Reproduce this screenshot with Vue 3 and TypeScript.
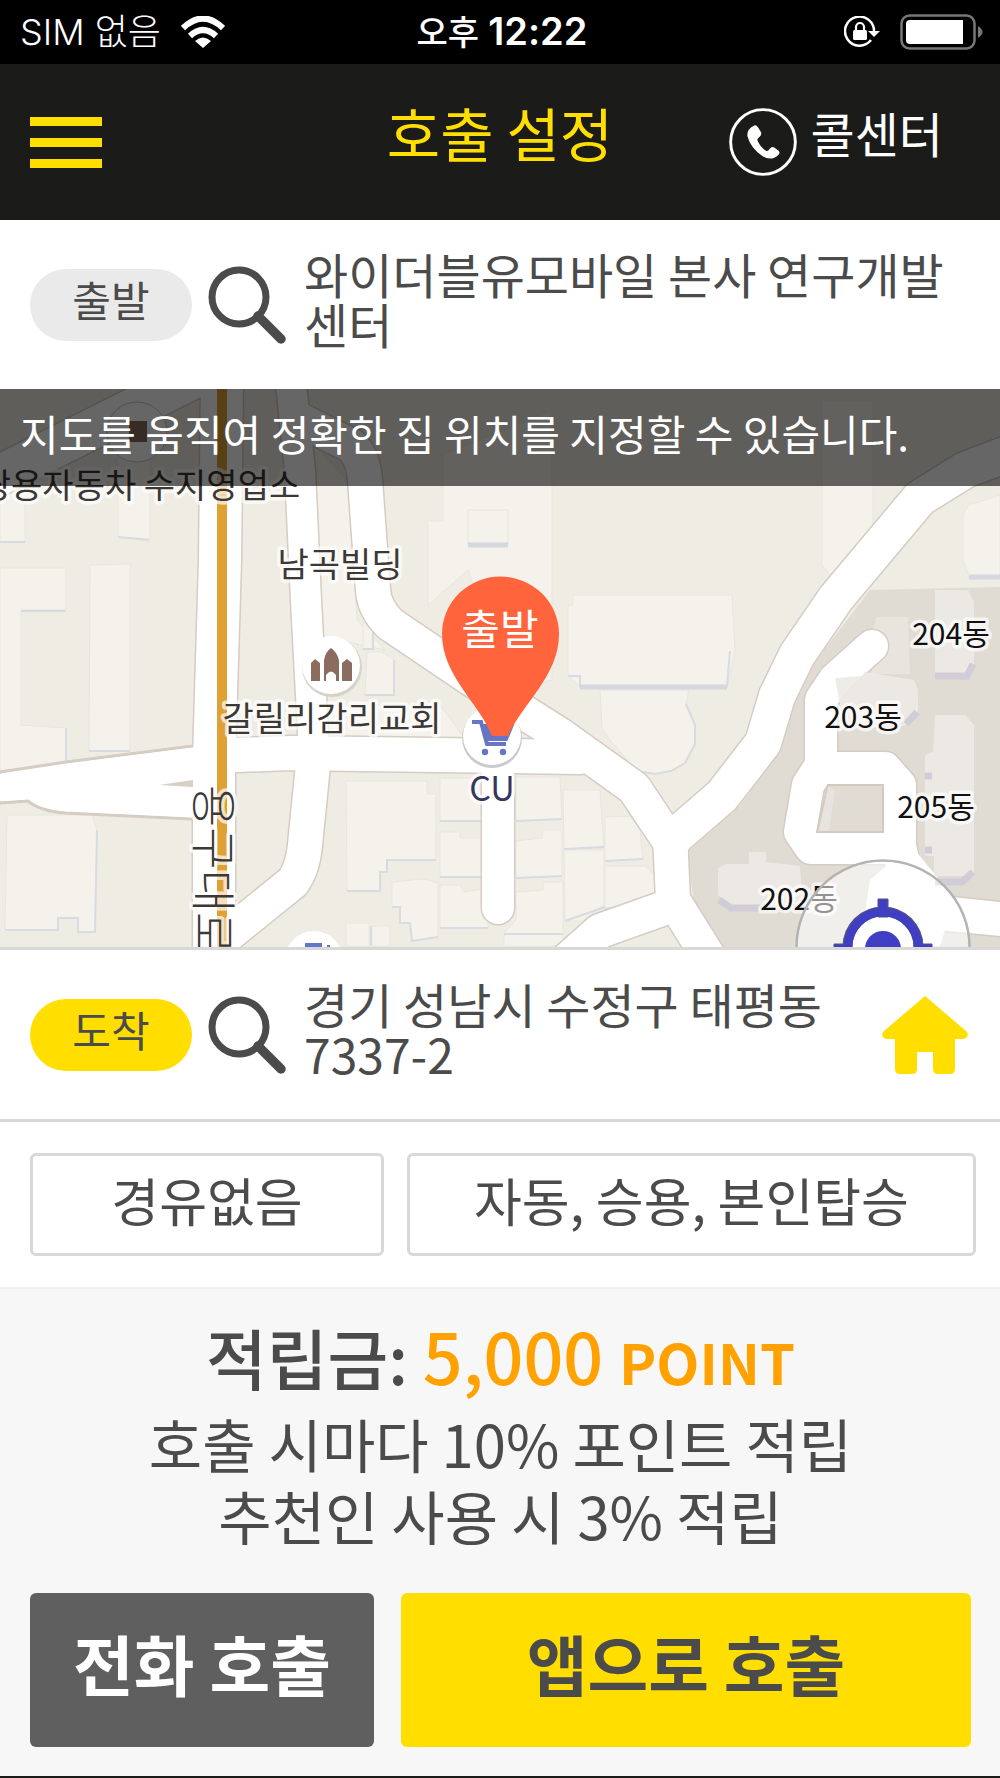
<script setup lang="ts">
interface MapLabel {
  text: string
  x: number
  y: number
  kind: 'place' | 'block'
}

interface Building {
  points: string
  shadow?: string
}

const labels: MapLabel[] = [
  { text: '쌍용자동차 수지영업소', x: 140, y: 498, kind: 'place' },
  { text: '남곡빌딩', x: 340, y: 577, kind: 'place' },
  { text: '갈릴리감리교회', x: 332, y: 731, kind: 'place' },
  { text: '204동', x: 951, y: 645, kind: 'block' },
  { text: '203동', x: 863, y: 728, kind: 'block' },
  { text: '205동', x: 936, y: 818, kind: 'block' },
  { text: '202동', x: 799, y: 910, kind: 'block' },
]

const roads: { d: string; width: number }[] = [
  { d: 'M-10 480L110 420L200 375', width: 40 },
  { d: 'M222 380L220 560L214 760L214 950', width: 42 },
  { d: 'M290 375L300 470L306 600L314 752', width: 30 },
  { d: 'M314 755L305 845Q303 868 293 882L225 937', width: 34 },
  { d: 'M300 420L350 445Q363 455 365 480L373 590Q374 608 390 624L470 678L560 735L634 788L672 845', width: 34 },
  { d: 'M214 756L290 753L580 757', width: 34 },
  { d: 'M498 765V908', width: 32 },
  { d: 'M671 840L722 796L763 743L777 696L797 655L836 598L920 498L965 470L1010 453', width: 36 },
  { d: 'M670 835L673 900L708 956', width: 34 },
  { d: 'M673 905L600 931L565 962', width: 34 },
  { d: 'M872 646L835 679L821 700V765L808 785L800 832L811 848H900V785L885 768H822', width: 32 },
  { d: 'M900 850Q905 895 950 914L1010 920', width: 34 },
]

const buildings: Building[] = [
  { points: '0,568 66,568 66,610 21,610 21,725 66,728 66,768 0,771', shadow: 'M21 611H66M66 728V768L0 771' },
  { points: '90,565 130,564 130,751 89,751', shadow: 'M89 751H130' },
  { points: '0,470 25,480 25,542 0,542', shadow: 'M0 542H25' },
  { points: '118,450 150,450 150,539 118,537', shadow: 'M118 537L149 540' },
  { points: '7,815 92,815 97,830 95,932 78,932 78,918 58,918 58,930 5,930', shadow: 'M5 930H58V918H78V932H95L97 830' },
  { points: '312,440 348,482 357,620 385,650 320,636', shadow: '' },
  { points: '363,622 373,632 373,649 363,649', shadow: 'M363 649H373V632' },
  { points: '367,652 382,652 394,660 394,695 365,695', shadow: 'M365 695H394V660' },
  { points: '331,705 440,705 466,740 433,743 366,745 331,737', shadow: 'M366 745L433 743' },
  { points: '428,521 443,521 443,455 552,410 552,680 510,690 468,570 428,605', shadow: '' },
  { points: '468,510 508,510 508,545 468,545', shadow: 'M468 545H508' },
  { points: '573,595 732,595 735,650 728,685 580,687 568,675 568,605 573,605', shadow: 'M568 676H580V686H727L730 651' },
  { points: '600,690 689,690 686,704 695,725 695,744 685,763 671,771 655,774 637,771 610,740 602,728', shadow: 'M686 704L695 725V744L685 763L671 771L655 774L637 771' },
  { points: '822,400 873,400 873,535 830,575 822,565', shadow: '' },
  { points: '969,505 1000,495 1000,576 969,576 963,560 963,514', shadow: 'M969 576H1000' },
  { points: '346,781 427,781 427,794 436,794 436,860 387,860 387,872 380,872 380,891 347,891', shadow: 'M347 891H380V872H387V860H436' },
  { points: '440,778 485,778 485,821 440,821', shadow: 'M440 821H485' },
  { points: '440,832 460,832 460,838 488,838 488,877 440,877', shadow: 'M440 877H488' },
  { points: '440,885 460,885 464,892 488,888 488,928 440,928', shadow: 'M440 928H488' },
  { points: '392,882 424,879 438,883 438,937 412,941 410,923 400,923 400,907 392,907', shadow: 'M392 907H400V923H410L412 941L438 937' },
  { points: '346,923 369,923 369,946 346,946', shadow: '' },
  { points: '372,926 390,926 390,946 372,946', shadow: 'M371 926V946' },
  { points: '516,777 560,777 562,819 516,821', shadow: 'M516 821L562 819' },
  { points: '516,841 542,838 542,830 562,830 562,876 516,878', shadow: 'M516 878L562 876' },
  { points: '516,892 543,890 543,882 563,882 563,946 504,946 504,933 516,920', shadow: 'M504 934H563' },
  { points: '563,790 600,790 604,848 564,849', shadow: 'M564 849L604 847' },
  { points: '564,850 604,850 604,905 582,921 565,921', shadow: 'M565 921L605 907' },
  { points: '605,817 630,816 640,830 643,859 605,861', shadow: 'M605 861L643 859' },
  { points: '605,866 645,866 655,875 655,896 638,904 605,909', shadow: 'M605 909L638 904L655 896' },
]

const blocks: Building[] = [
  { points: '935,590 968,590 974,602 974,665 965,674 935,674', shadow: 'M935 676H967L973 664' },
  { points: '835,678 862,676 865,672 914,680 918,690 918,712 904,726 850,728 840,705', shadow: 'M906 724L917 712' },
  { points: '935,715 965,715 974,725 974,876 934,876 934,856 925,856 925,755 933,752', shadow: 'M925 776H932M925 850H932M935 882H962L973 872' },
  { points: '718,868 726,864 749,864 749,852 766,852 766,862 800,866 803,905 730,905 718,895', shadow: 'M719 900L731 908H768' },
]
</script>

<template>
  <div class="app">
    <div class="status">
      <div class="status-side">
        <span class="carrier">SIM 없음</span>
        <svg class="wifi" viewBox="0 0 44 32" aria-hidden="true">
          <path d="M2 12Q22-7 42 12M9 20Q22 8 35 20" fill="none" stroke="#fff" stroke-width="6" />
          <path d="M14 25Q22 18 30 25L22 32Z" fill="#fff" />
        </svg>
      </div>
      <span class="time">오후 <b>12:22</b></span>
      <div class="status-side status-right">
        <svg class="lock" viewBox="0 0 36 32" aria-hidden="true">
          <path d="M27 24A14.5 14.5 0 1 1 30 16" fill="none" stroke="#fff" stroke-width="2.5" />
          <path d="M24 15H36L30 21Z" fill="#fff" />
          <rect x="9" y="14" width="14" height="10" rx="1.5" fill="#fff" />
          <path d="M12 15V11A4 4 0 0 1 20 11V15" fill="none" stroke="#fff" stroke-width="2.2" />
        </svg>
        <svg class="battery" viewBox="0 0 84 36" aria-hidden="true">
          <rect x="1.5" y="1.5" width="73" height="33" rx="8" fill="none" stroke="#777" stroke-width="2.5" />
          <path d="M10 6H63V30H10Q6 30 6 26V10Q6 6 10 6Z" fill="#fff" />
          <path d="M78 12Q87 18 78 24Z" fill="#777" />
        </svg>
      </div>
    </div>

    <header class="header">
      <button class="menu" type="button" aria-label="메뉴">
        <span></span><span></span><span></span>
      </button>
      <h1>호출 설정</h1>
      <a class="call-center" href="#call-center">
        <svg viewBox="0 0 70 70" aria-hidden="true">
          <circle cx="35" cy="35" r="33.3" fill="none" stroke="#fff" stroke-width="3" />
          <path d="M26 18Q28 17 30 20L33 25Q34 28 31 30Q28 32 30 35Q33 41 38 44Q40 45 42 42Q44 39 47 41L51 44Q53 46 51 48Q44 55 35 50Q22 41 19 29Q18 22 26 18Z" fill="#fff" />
        </svg>
        <span>콜센터</span>
      </a>
    </header>

    <section class="place">
      <span class="chip">출발</span>
      <button class="icon-button" type="button" aria-label="출발지 검색">
        <svg class="search" viewBox="0 0 78 78" aria-hidden="true">
          <circle cx="31" cy="31" r="27" fill="none" stroke="#4b4b4b" stroke-width="7" />
          <path d="M50 50L73 73" stroke="#4b4b4b" stroke-width="9.5" stroke-linecap="round" />
        </svg>
      </button>
      <p class="address">와이더블유모바일 본사 연구개발센터</p>
    </section>

    <section class="map" aria-label="지도">
      <svg class="map-canvas" viewBox="0 389 1000 558" preserveAspectRatio="xMidYMid slice">
        <rect x="0" y="389" width="1000" height="558" fill="#efece4" />
        <path d="M870 590L1000 587V947H700L687 852L740 806L778 751L793 702L815 662Z" fill="#e0dbd3" />
        <path d="M877 617H908L910 674H872V630Z" fill="#e8e5df" />

        <g stroke="#e8e6df" stroke-width="1">
          <polygon v-for="(b, i) in buildings" :key="i" :points="b.points" fill="#f4f2ea" />
        </g>
        <path v-for="(b, i) in buildings" :key="'s' + i" :d="b.shadow" fill="none" stroke="#d9dbe2" stroke-width="2" />
        <path d="M580 687H727M468 545H508M969 577H1000" stroke="#d6d8df" stroke-width="5" />

        <g fill="none" stroke-linejoin="round" stroke-linecap="round">
          <path v-for="(r, i) in roads" :key="'c' + i" :d="r.d" stroke="#d5ccc3" :stroke-width="r.width + 3" />
          <path d="M0 772L66 762L193 746V819L65 813Q40 811 28 801L0 803Z" fill="#fff" stroke="#d5ccc3" stroke-width="3" />
          <path v-for="(r, i) in roads" :key="'r' + i" :d="r.d" stroke="#fff" :stroke-width="r.width" />
        </g>
        <path d="M0 774L66 764L205 746V818L65 811Q40 809 28 799L0 801Z" fill="#fff" />
        <path d="M159 785L193 780V787Z" fill="#d6d0c6" />
        <path d="M828 785H883V832H817Z" fill="#e0dbd3" stroke="#d3c9be" stroke-width="2" />
        <path d="M828 787L835 790L829 831H819Z" fill="#e7e4df" />
        <path d="M885 867L915 850L955 899L940 946H860L870 880Z" fill="#fff" />
        <path d="M222 389V947" stroke="#dfa133" stroke-width="10" />

        <polygon v-for="(b, i) in blocks" :key="'b' + i" :points="b.points" fill="#edeae5" fill-opacity="0.92" />
        <path v-for="(b, i) in blocks" :key="'t' + i" :d="b.shadow" fill="none" stroke="#d0cdd8" stroke-width="7" />

        <circle cx="137" cy="432" r="30" fill="#fff" stroke="#c8c5c0" />
        <path d="M129 421H147V442H129Z" fill="#8b6d60" />

        <circle cx="332" cy="667" r="30" fill="#d6d3cd" />
        <circle cx="331" cy="665" r="29" fill="#fff" />
        <path d="M311 681V663L315 659L320 663V681ZM324 681V660Q326 651 331 648Q337 652 339 660V681H336V675Q331 668 326 675V681ZM342 681V663L347 659L352 663V681Z" fill="#8b6d60" />

        <circle cx="492" cy="738" r="30" fill="#c9c9d0" />
        <circle cx="492" cy="736" r="29" fill="#fff" />
        <path d="M472 722H481L487 744H506M482 727H511L506 739H485" fill="none" stroke="#6775c5" stroke-width="4" />
        <path d="M481 724H511L506 737H485Z" fill="#6775c5" />
        <circle cx="485" cy="752" r="3.2" fill="#6775c5" />
        <circle cx="503" cy="752" r="3.2" fill="#6775c5" />

        <circle cx="314" cy="960" r="29" fill="#fff" />
        <path d="M305 943H322V947H305ZM327 945H330V947H327Z" fill="#6775c5" />

        <text
          v-for="l in labels"
          :key="l.text"
          :x="l.x"
          :y="l.y"
          :class="['label', l.kind]"
        >{{ l.text }}</text>
        <text class="label shop" x="492" y="801">CU</text>
        <text class="label street" transform="translate(197 785) rotate(90)">용구대로</text>

        <path d="M492 736C480 704 442 676 442 634A58 57 0 0 1 559 634C559 676 522 704 508 736Z" fill="#ff643d" />
        <text class="pin-text" x="500" y="645">출발</text>
      </svg>
      <p class="notice">지도를 움직여 정확한 집 위치를 지정할 수 있습니다.</p>
      <button class="locate" type="button" aria-label="현재 위치">
        <svg viewBox="0 0 176 176" aria-hidden="true">
          <circle cx="88" cy="88" r="86.5" fill="#fff" fill-opacity="0.55" stroke="#b5b3b1" stroke-width="2.5" />
          <circle cx="88" cy="88" r="35.5" fill="#fff" stroke="#55547c" stroke-width="10" />
          <path d="M83 40H93V58H83ZM39 85H55V95H39ZM121 85H137V95H121Z" fill="#403fc3" stroke="#55547c" />
          <circle cx="88" cy="88" r="35" fill="none" stroke="#403fc3" stroke-width="8.5" />
          <circle cx="88" cy="90" r="18" fill="#403fc3" />
        </svg>
      </button>
    </section>

    <section class="place destination">
      <span class="chip chip-active">도착</span>
      <button class="icon-button" type="button" aria-label="도착지 검색">
        <svg class="search" viewBox="0 0 78 78" aria-hidden="true">
          <circle cx="31" cy="31" r="27" fill="none" stroke="#4b4b4b" stroke-width="7" />
          <path d="M50 50L73 73" stroke="#4b4b4b" stroke-width="9.5" stroke-linecap="round" />
        </svg>
      </button>
      <p class="address">경기 성남시 수정구 태평동 7337-2</p>
      <button class="icon-button" type="button" aria-label="집으로">
        <svg class="home" viewBox="0 0 86 78" aria-hidden="true">
          <path d="M43 0L84 35Q87 38 85 41Q84 43 81 43H73V73Q73 78 68 78H56Q51 78 51 73V56H35V73Q35 78 30 78H18Q13 78 13 73V43H5Q2 43 1 41Q-1 38 2 35Z" fill="#ffde00" />
        </svg>
      </button>
    </section>

    <section class="options">
      <button type="button">경유없음</button>
      <button type="button">자동, 승용, 본인탑승</button>
    </section>

    <section class="summary">
      <p class="points">적립금: <strong>5,000 <small>POINT</small></strong></p>
      <p class="benefit">호출 시마다 10% 포인트 적립<br />추천인 사용 시 3% 적립</p>
      <div class="actions">
        <button class="by-phone" type="button">전화 호출</button>
        <button class="by-app" type="button">앱으로 호출</button>
      </div>
    </section>
  </div>
</template>

<style>
body {
  margin: 0;
  background: #f7f7f7;
}
</style>

<style scoped>
.app {
  display: flex;
  flex-direction: column;
  min-height: 100vh;
  box-sizing: border-box;
  border-bottom: 2px solid #1b1b19;
  background: #f7f7f7;
  color: #4b4b4b;
  font-family: 'Noto Sans CJK KR', sans-serif;
}

.app p,
.app h1 {
  margin: 0;
}

button {
  padding: 0;
  border: 0;
  background: none;
  color: inherit;
  font-family: inherit;
  cursor: pointer;
}

svg {
  display: block;
}

.status {
  display: grid;
  grid-template-columns: 1fr auto 1fr;
  align-items: center;
  height: 64px;
  padding: 0 16px 0 20px;
  background: #000;
  color: #fff;
  font-family: Inter, 'Noto Sans CJK KR', sans-serif;
  font-size: 36px;
  line-height: 48px;
}

.status-side {
  display: flex;
  align-items: center;
  gap: 20px;
}

.status-right {
  justify-content: flex-end;
}

.carrier {
  font-weight: 300;
}

.time {
  font-size: 34px;
  font-weight: 500;
}

.time b {
  font-size: 38px;
  font-weight: 600;
}

.wifi {
  width: 44px;
  height: 32px;
}

.lock {
  width: 36px;
  height: 32px;
}

.battery {
  width: 84px;
  height: 36px;
}

.header {
  display: grid;
  grid-template-columns: 1fr auto 1fr;
  align-items: center;
  height: 156px;
  padding: 0 30px;
  background: #1b1b19;
}

.menu {
  display: flex;
  flex-direction: column;
  gap: 12px;
  width: 72px;
}

.menu span {
  height: 9px;
  background: #ffde00;
}

.header h1 {
  padding-bottom: 20px;
  color: #ffde00;
  font-size: 58px;
  font-weight: 400;
  line-height: 72px;
}

.call-center {
  display: flex;
  align-items: center;
  justify-self: end;
  gap: 14px;
  margin-right: 27px;
  color: #fff;
  font-size: 48px;
  line-height: 50px;
  text-decoration: none;
}

.call-center svg {
  width: 68px;
  height: 68px;
}

.call-center span {
  padding-bottom: 20px;
}

.place {
  display: flex;
  align-items: center;
  height: 169px;
  padding: 0 30px;
  background: #fff;
}

.chip {
  width: 162px;
  height: 72px;
  box-sizing: border-box;
  border-radius: 36px;
  background: #eaeaea;
  font-size: 42px;
  line-height: 60px;
  text-align: center;
}

.chip-active {
  background: #ffde00;
}

.icon-button {
  flex: none;
}

.search {
  width: 78px;
  height: 78px;
  margin: 0 18px 0 16px;
}

.address {
  flex: 1;
  padding-bottom: 14px;
  font-size: 48px;
  line-height: 50px;
}

.home {
  width: 86px;
  height: 78px;
  margin-right: 2px;
}

.map {
  position: relative;
  height: 558px;
  overflow: hidden;
}

.map-canvas {
  width: 100%;
  height: 100%;
}

.label {
  fill: #3b3835;
  stroke: #fff;
  stroke-opacity: 0.7;
  stroke-width: 7px;
  stroke-linejoin: round;
  paint-order: stroke;
  text-anchor: middle;
  font-size: 34px;
}

.block {
  fill: #111;
  font-size: 30px;
}

.shop {
  fill: #35375c;
}

.street {
  text-anchor: start;
  font-size: 46px;
  font-weight: 300;
}

.pin-text {
  fill: #fff;
  text-anchor: middle;
  font-size: 42px;
}

.notice {
  position: absolute;
  top: 0;
  right: 0;
  left: 0;
  height: 97px;
  padding: 0 20px;
  background: rgba(0, 0, 0, 0.6);
  color: #fff;
  font-size: 42px;
  line-height: 88px;
}

.locate {
  position: absolute;
  right: 29px;
  bottom: -88px;
  width: 176px;
  height: 176px;
}

.destination {
  border: solid #d8d8d8;
  border-width: 3px 0;
}

.options {
  display: grid;
  grid-template-columns: 354fr 569fr;
  gap: 23px;
  padding: 31px 24px 31px 30px;
  border-bottom: 2px solid #efefef;
  background: #fff;
}

.options button {
  height: 103px;
  padding-bottom: 10px;
  border: 3px solid #d8d8d8;
  border-radius: 6px;
  font-size: 52px;
  line-height: 72px;
}

.summary {
  padding: 24px 29px 29px 30px;
  text-align: center;
}

.points {
  font-size: 66px;
  font-weight: 500;
  line-height: 84px;
}

.points strong {
  color: #ffa200;
  font-size: 70px;
  font-weight: 500;
}

.points small {
  font-size: 56px;
  font-weight: 700;
}

.benefit {
  margin-top: 4px;
  font-size: 58px;
  line-height: 72px;
}

.app .benefit {
  margin-top: 4px;
}

.actions {
  display: grid;
  grid-template-columns: 344fr 570fr;
  gap: 27px;
  margin-top: 42px;
}

.actions button {
  height: 154px;
  padding-bottom: 16px;
  border-radius: 6px;
  font-size: 66px;
  font-weight: 700;
  line-height: 84px;
}

.by-phone {
  background: #5f5f5f;
  color: #fff;
}

.by-app {
  background: #ffde00;
}
</style>
